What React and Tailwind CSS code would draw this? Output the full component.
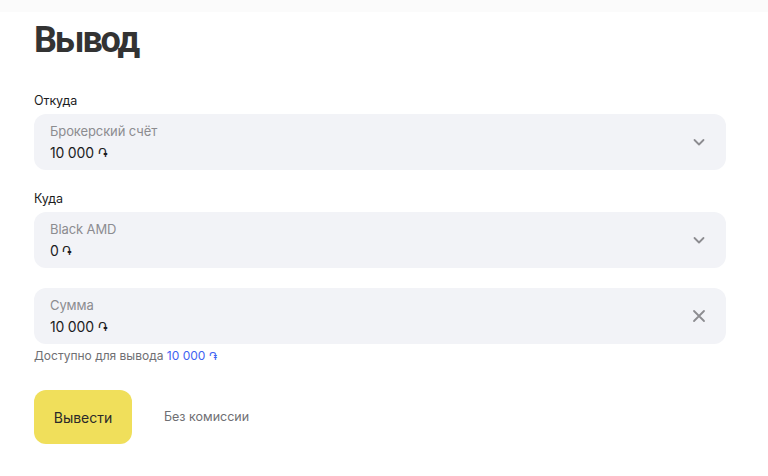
import { useState } from "react";

const Chevron = () => (
  <svg width="14" height="14" viewBox="0 0 14 14" fill="none">
    <path d="M2.5 5l4.5 4.5L11.5 5" stroke="#8c8c90" strokeWidth="1.8" strokeLinecap="round" strokeLinejoin="round" />
  </svg>
);

const Cross = () => (
  <svg width="14" height="14" viewBox="0 0 14 14" fill="none">
    <path d="M2 2l10 10M12 2L2 12" stroke="#8c8c90" strokeWidth="1.8" strokeLinecap="round" />
  </svg>
);

// dram sign in a font that carries it
const Dram = () => <span className="font-['DejaVu_Sans',sans-serif] text-[0.9em]">֏</span>;

const Field = ({ caption, value, icon }) => (
  <div className="flex h-[56px] items-center justify-between rounded-[12px] bg-[#f2f3f7] pl-4 pr-5">
    <div className="flex flex-col pt-[1px]">
      <span className="text-[13px] leading-[18px] tracking-[-0.1px] text-[#8c8c90]">{caption}</span>
      <span className="mt-[3px] text-[14px] leading-[20px] tracking-[-0.2px] text-[#1c1c1e]">
        {value} <Dram />
      </span>
    </div>
    {icon}
  </div>
);

export default function App() {
  const [amount] = useState("10 000");

  return (
    <div className="min-h-[476px] bg-white font-['Inter',sans-serif] text-[#1c1c1e]">
      {/* header strip */}
      <div className="h-3 bg-[#fbfbfb]" />

      <div className="pl-[34px] pr-[42px]">
        <h1 className="mt-[8px] font-['Roboto',sans-serif] text-[36px] font-bold leading-[40px] tracking-[-2.2px] text-[#333333]">
          Вывод
        </h1>

        {/* from */}
        <div className="mt-[31px] mb-[3px] text-[12.5px] leading-[20px] tracking-[-0.1px]">Откуда</div>
        <Field caption="Брокерский счёт" value="10 000" icon={<Chevron />} />

        {/* to */}
        <div className="mt-[19px] mb-[3px] text-[12.5px] leading-[20px] tracking-[-0.1px]">Куда</div>
        <Field caption="Black AMD" value="0" icon={<Chevron />} />

        {/* amount */}
        <div className="mt-[20px]">
          <Field caption="Сумма" value={amount} icon={<Cross />} />
        </div>
        <div className="mt-[4px] text-[12px] leading-[16px] text-[#6f6f73]">
          Доступно для вывода{" "}
          <span className="text-[#3f62f2]">
            10 000 <Dram />
          </span>
        </div>

        <div className="mt-[25px] flex items-center gap-8">
          <button className="h-[54px] w-[98px] rounded-[12px] bg-[#f0df5b] text-[14px] text-[#2a2a2a]">
            Вывести
          </button>
          <span className="text-[12.5px] text-[#6f6f73]">Без комиссии</span>
        </div>
      </div>
    </div>
  );
}
